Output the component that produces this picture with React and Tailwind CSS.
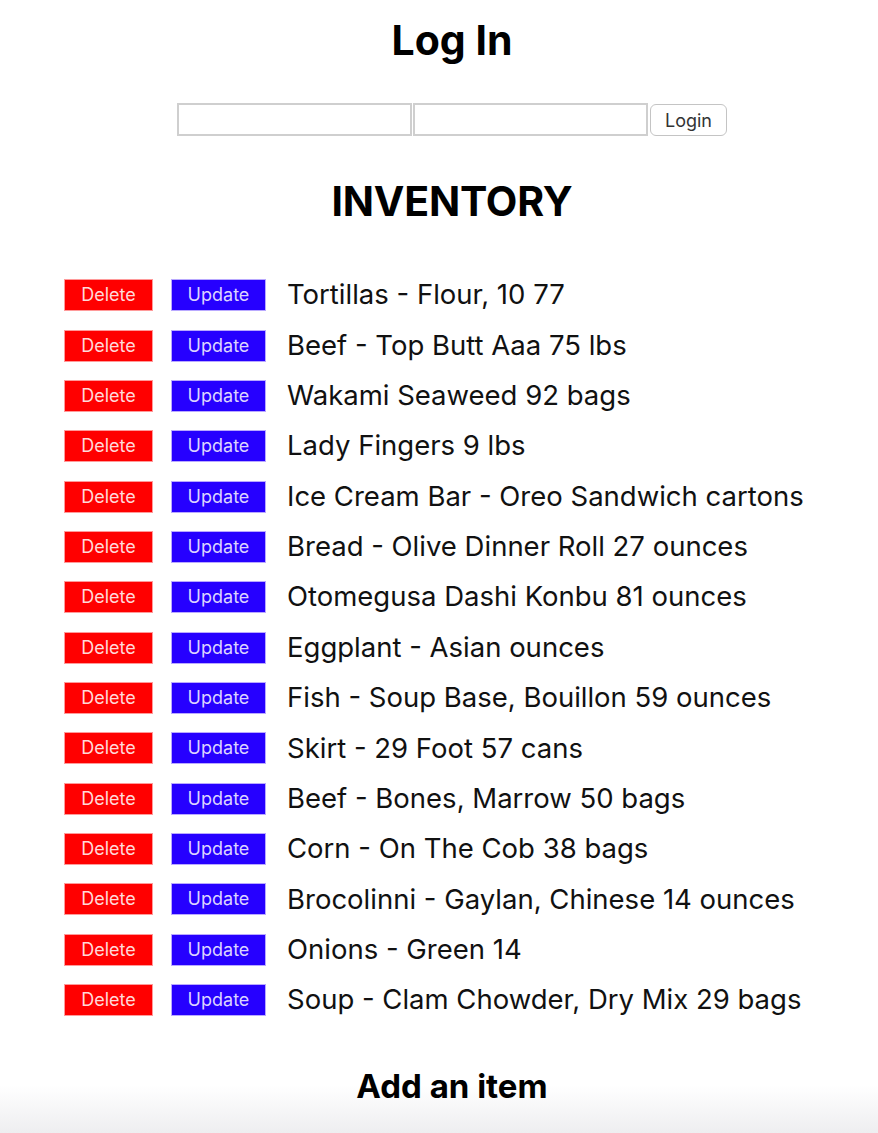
import React from "react";

const items = [
  "Tortillas - Flour, 10 77",
  "Beef - Top Butt Aaa 75 lbs",
  "Wakami Seaweed 92 bags",
  "Lady Fingers 9 lbs",
  "Ice Cream Bar - Oreo Sandwich cartons",
  "Bread - Olive Dinner Roll 27 ounces",
  "Otomegusa Dashi Konbu 81 ounces",
  "Eggplant - Asian ounces",
  "Fish - Soup Base, Bouillon 59 ounces",
  "Skirt - 29 Foot 57 cans",
  "Beef - Bones, Marrow 50 bags",
  "Corn - On The Cob 38 bags",
  "Brocolinni - Gaylan, Chinese 14 ounces",
  "Onions - Green 14",
  "Soup - Clam Chowder, Dry Mix 29 bags",
];

export default function App() {
  return (
    <div className="relative min-h-[1133px] bg-white font-['Inter',sans-serif] text-black overflow-hidden">
      <div className="absolute bottom-0 left-0 right-0 h-[48px] bg-gradient-to-b from-white to-[#eeeef0]"></div>
      <div className="relative pl-[26px] text-center">
        <h1 className="pt-[18px] text-[41px] font-bold leading-[44px]">Log In</h1>
        <div className="mt-[41px] flex justify-center">
          <input className="h-[33px] w-[235px] border-2 border-[#cfcfcf] bg-white" />
          <input className="ml-px h-[33px] w-[235px] border-2 border-[#cfcfcf] bg-white" />
          <button className="ml-[2px] mt-px h-[32px] w-[77px] rounded-[6px] border border-[#c4c4c4] bg-white text-[18px] text-[#333] font-['Inter',sans-serif]">
            Login
          </button>
        </div>
        <h2 className="mt-[40px] text-[41px] font-bold leading-[50px] tracking-[-0.2px]">INVENTORY</h2>
      </div>
      <ul className="relative mt-[44px] pl-[64px]">
        {items.map((t, i) => (
          <li key={i} className="flex h-[50.35px] items-center">
            <button className="h-[32px] w-[89px] border border-[#ff9a9a] bg-[#ff0000] text-[18px] text-[#ffd9d9] leading-none">
              Delete
            </button>
            <button className="ml-[18px] h-[32px] w-[95px] border border-[#b9a9ff] bg-[#2600ff] text-[18px] text-[#dcd4ff] leading-none">
              Update
            </button>
            <span className="ml-[21px] text-[27.5px] leading-none text-[#111]">{t}</span>
          </li>
        ))}
      </ul>
      <div className="relative pl-[26px] text-center">
        <h3 className="mt-[43px] text-[33px] font-bold leading-[36px]">Add an item</h3>
      </div>
    </div>
  );
}
